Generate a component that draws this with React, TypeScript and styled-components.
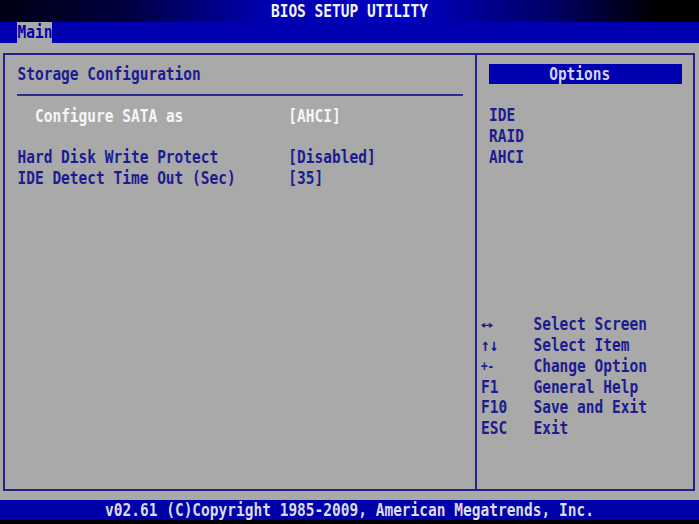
import React from "react";
import styled, { createGlobalStyle } from "styled-components";

const CW = 8.7375;
const RH = 20.8;
const NAVY = "#1c1c8e";
const GRAY = "#a9a9a9";
const BLUE = "#0000b0";

const Global = createGlobalStyle`
  html, body { margin: 0; padding: 0; background: #000; }
  body { width: 699px; height: 524px; overflow: hidden; }
`;

const Screen = styled.div`
  width: 699px;
  height: 524px;
  display: flex;
  flex-direction: column;
  font-family: "DejaVu Sans Mono", "Liberation Mono", monospace;
  font-weight: bold;
  font-size: 14.5px;
  background: ${GRAY};
  color: ${NAVY};
`;

const Txt = styled.span<{ $c?: string; $s?: number; $wide?: boolean }>`
  display: inline-block;
  white-space: pre;
  transform: ${(p) => (p.$wide ? "scale(1.9, 1.2)" : "scaleY(1.2)")};
  transform-origin: ${(p) => (p.$wide ? "0 55%" : "50% 55%")};
  color: ${(p) => p.$c || "inherit"};
  font-size: ${(p) => (p.$s ? `${p.$s}px` : "inherit")};
`;

const TitleBar = styled.div`
  height: 22px;
  line-height: 22px;
  text-align: center;
  color: #f4f4ff;
  background: linear-gradient(
    90deg,
    #000014 0%,
    #000040 18%,
    #0000b0 38%,
    #0000c4 58%,
    #000060 80%,
    #000000 94%
  );
`;

const MenuBar = styled.div`
  height: 21px;
  background: ${BLUE};
  padding-left: ${2 * CW}px;
  display: flex;
`;

const Tab = styled.div`
  width: ${4 * CW}px;
  height: 21px;
  line-height: 21px;
  background: ${GRAY};
  color: #0000a8;
`;

const Body = styled.div`
  flex: 1;
  display: flex;
  padding: 10px 4px 9px 3px;
  background: ${GRAY};
`;

const Frame = styled.div`
  flex: 1;
  display: grid;
  grid-template-columns: 472px 1fr;
  border: 2px solid #22228a;
`;

const LeftPanel = styled.div`
  border-right: 2px solid #22228a;
  padding: 9px 0 0 ${2 * CW - 5}px;
  display: flex;
  flex-direction: column;
`;

const Row = styled.div`
  height: ${RH}px;
  line-height: ${RH}px;
`;

const Rule = styled.div`
  height: ${RH}px;
  display: flex;
  align-items: center;
  &::after {
    content: "";
    width: ${51 * CW}px;
    height: 2px;
    background: #2a2a90;
  }
`;

const Setting = styled.div<{ $indent?: boolean }>`
  height: ${RH}px;
  line-height: ${RH}px;
  display: grid;
  grid-template-columns: ${31 * CW}px auto;
  padding-left: ${(p) => (p.$indent ? 2 * CW : 0)}px;
`;

const SettingValue = styled.div<{ $indent?: boolean }>`
  margin-left: ${(p) => (p.$indent ? -2 * CW : 0)}px;
`;

const RightPanel = styled.div`
  display: flex;
  flex-direction: column;
  padding: 9px 11.5px 50px 0;
`;

const OptionsHeader = styled.div`
  margin-left: 12px;
  height: 20px;
  line-height: 20px;
  background: #0000b0;
  color: #d4d4f4;
  padding-left: ${7 * CW - 1}px;
  margin-bottom: 21px;
`;

const OptionItem = styled.div`
  height: ${RH}px;
  line-height: ${RH}px;
  padding-left: 12px;
`;

const Help = styled.div`
  margin-top: auto;
  padding-left: 4px;
  display: grid;
  grid-template-columns: ${6 * CW}px auto;
  grid-auto-rows: ${RH}px;
  line-height: ${RH}px;
`;

const Footer = styled.div`
  height: 20px;
  line-height: 20px;
  background: #0000aa;
  border-bottom: 4px solid #000;
  color: #dcdcee;
  text-align: center;
`;

const settings = [
  { label: "Configure SATA as", value: "[AHCI]", active: true },
  null,
  { label: "Hard Disk Write Protect", value: "[Disabled]", active: false },
  { label: "IDE Detect Time Out (Sec)", value: "[35]", active: false },
];

const help: [string, string, number?, boolean?][] = [
  ["↔", "Select Screen", 11, true],
  ["↑↓", "Select Item"],
  ["+-", "Change Option", 11],
  ["F1", "General Help"],
  ["F10", "Save and Exit"],
  ["ESC", "Exit"],
];

export default function App() {
  return (
    <>
      <Global />
      <Screen>
        <TitleBar>
          <Txt>BIOS SETUP UTILITY</Txt>
        </TitleBar>
        <MenuBar>
          <Tab>
            <Txt>Main</Txt>
          </Tab>
        </MenuBar>
        <Body>
          <Frame>
            <LeftPanel>
              <Row>
                <Txt>Storage Configuration</Txt>
              </Row>
              <Rule />
              {settings.map((s, i) =>
                s ? (
                  <Setting key={i} $indent={s.active}>
                    <Txt $c={s.active ? "#f6f6f6" : undefined}>{s.label}</Txt>
                    <SettingValue $indent={s.active}>
                      <Txt $c={s.active ? "#f6f6f6" : undefined}>{s.value}</Txt>
                    </SettingValue>
                  </Setting>
                ) : (
                  <Row key={i} />
                )
              )}
            </LeftPanel>
            <RightPanel>
              <OptionsHeader>
                <Txt>Options</Txt>
              </OptionsHeader>
              {["IDE", "RAID", "AHCI"].map((o) => (
                <OptionItem key={o}>
                  <Txt>{o}</Txt>
                </OptionItem>
              ))}
              <Help>
                {help.map(([k, d, s, w]) => (
                  <React.Fragment key={d}>
                    <div>
                      <Txt $s={s} $wide={w}>
                        {k}
                      </Txt>
                    </div>
                    <div>
                      <Txt>{d}</Txt>
                    </div>
                  </React.Fragment>
                ))}
              </Help>
            </RightPanel>
          </Frame>
        </Body>
        <Footer>
          <Txt>v02.61 (C)Copyright 1985-2009, American Megatrends, Inc.</Txt>
        </Footer>
      </Screen>
    </>
  );
}
